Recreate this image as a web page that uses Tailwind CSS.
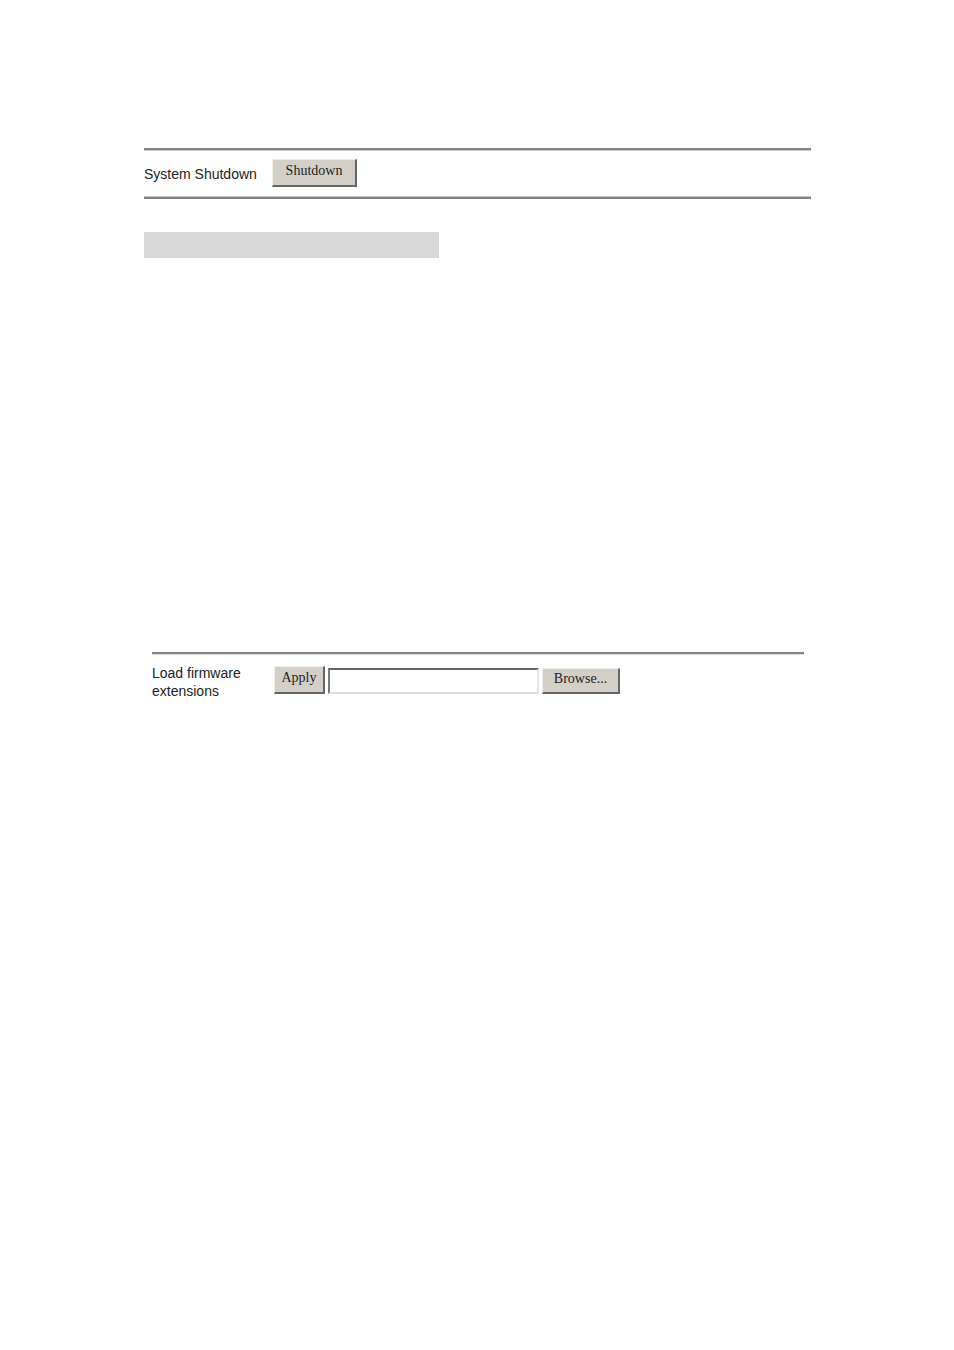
<!DOCTYPE html>
<html lang="en">
<head>
  <meta charset="UTF-8" />
  <meta name="viewport" content="width=device-width, initial-scale=1.0" />
  <title>System Maintenance</title>
  <script src="https://cdn.jsdelivr.net/npm/@tailwindcss/browser@4"></script>
</head>
<body class="bg-white text-[#222222] min-h-screen font-['Liberation_Sans',Arial,sans-serif] text-[14px] leading-[18px]">

  <main class="pl-36 pr-[143px] pt-[148px]">

    <!-- SHUTDOWN -->
    <section>
      <hr class="h-[3px] border-t-2 border-b border-t-[#838383] border-b-[#c6c6c6]" />
      <form class="flex items-start h-[45px] pt-2">
        <label for="shutdown" class="w-32 pt-[6px] whitespace-nowrap">System Shutdown</label>
        <button id="shutdown" type="button" class="w-[85px] h-7 pb-1 bg-[#d4d0c8] border-r-2 border-b-2 border-t border-l border-t-[#eeeeea] border-l-[#eeeeea] border-r-[#666666] border-b-[#666666] font-['Liberation_Serif','Times_New_Roman',serif] text-[14px] leading-5">Shutdown</button>
      </form>
      <hr class="h-[3px] border-t border-b-2 border-t-[#c6c6c6] border-b-[#838383]" />
    </section>

    <!-- HEADING BAR -->
    <div class="mt-[33px] w-[295px] h-[26px] bg-[#d9d9d9]"></div>

    <!-- FIRMWARE -->
    <section class="mt-[394px] ml-2 mr-[7px]">
      <hr class="h-[3px] border-t-2 border-b border-t-[#838383] border-b-[#dddddd]" />
      <form class="flex items-start pt-[9px]">
        <label for="firmware" class="w-[122px] pr-6">Load firmware extensions</label>
        <div class="flex items-end pt-[2px]">
          <button type="button" class="w-[51px] h-7 pb-1 bg-[#d4d0c8] border-r-2 border-b-2 border-t border-l border-t-[#eeeeea] border-l-[#eeeeea] border-r-[#666666] border-b-[#666666] font-['Liberation_Serif','Times_New_Roman',serif] text-[14px] leading-5">Apply</button>
          <input id="firmware" type="text" class="ml-[3px] w-[211px] h-[26px] px-1 bg-white border-t-2 border-l-2 border-r-2 border-b-2 border-t-[#666666] border-l-[#777777] border-r-[#e4e4e4] border-b-[#dddddd]" />
          <button type="button" class="ml-[3px] w-[78px] h-[26px] pb-1 bg-[#d4d0c8] border-r-2 border-b-2 border-t border-l border-t-[#eeeeea] border-l-[#eeeeea] border-r-[#666666] border-b-[#666666] font-['Liberation_Serif','Times_New_Roman',serif] text-[14px] leading-5">Browse...</button>
        </div>
      </form>
    </section>

  </main>

</body>
</html>
